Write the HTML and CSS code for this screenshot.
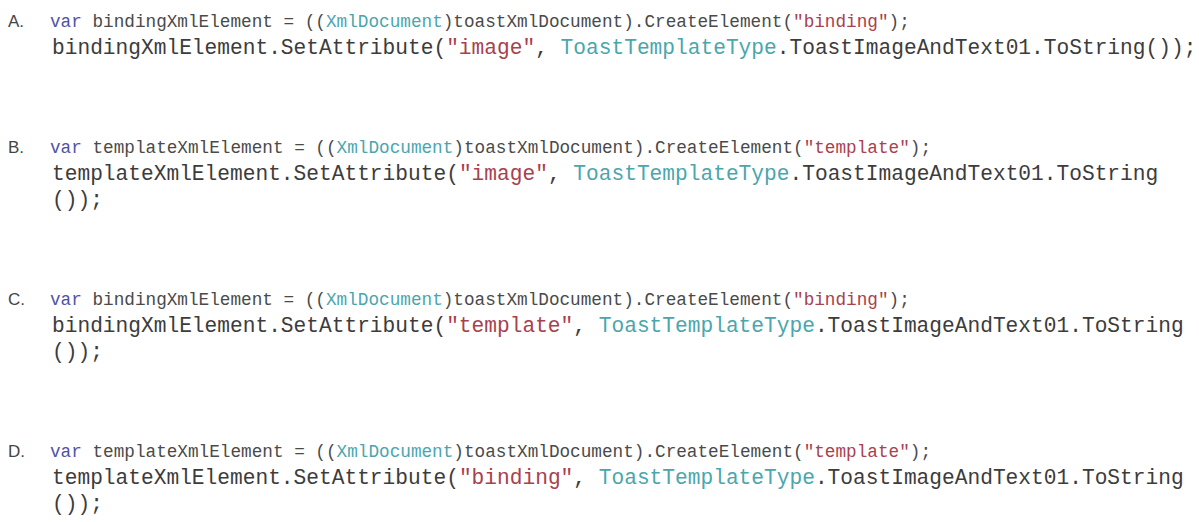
FILE: index.html
```html
<!DOCTYPE html>
<html>
<head>
<meta charset="utf-8">
<link rel="stylesheet" href="styles.css">
</head>
<body>
<div class="options">
  <div class="option">
    <div class="label">A.</div>
    <div class="code">
      <div class="line small"><span class="kw">var</span> bindingXmlElement = ((<span class="ty">XmlDocument</span>)toastXmlDocument).CreateElement(<span class="st">"binding"</span>);</div>
      <div class="line big">bindingXmlElement.SetAttribute(<span class="st">"image"</span>, <span class="ty">ToastTemplateType</span>.ToastImageAndText01.ToString());</div>
    </div>
  </div>
  <div class="option">
    <div class="label">B.</div>
    <div class="code">
      <div class="line small"><span class="kw">var</span> templateXmlElement = ((<span class="ty">XmlDocument</span>)toastXmlDocument).CreateElement(<span class="st">"template"</span>);</div>
      <div class="line big">templateXmlElement.SetAttribute(<span class="st">"image"</span>, <span class="ty">ToastTemplateType</span>.ToastImageAndText01.ToString</div>
      <div class="line big">());</div>
    </div>
  </div>
  <div class="option">
    <div class="label">C.</div>
    <div class="code">
      <div class="line small"><span class="kw">var</span> bindingXmlElement = ((<span class="ty">XmlDocument</span>)toastXmlDocument).CreateElement(<span class="st">"binding"</span>);</div>
      <div class="line big">bindingXmlElement.SetAttribute(<span class="st">"template"</span>, <span class="ty">ToastTemplateType</span>.ToastImageAndText01.ToString</div>
      <div class="line big">());</div>
    </div>
  </div>
  <div class="option">
    <div class="label">D.</div>
    <div class="code">
      <div class="line small"><span class="kw">var</span> templateXmlElement = ((<span class="ty">XmlDocument</span>)toastXmlDocument).CreateElement(<span class="st">"template"</span>);</div>
      <div class="line big">templateXmlElement.SetAttribute(<span class="st">"binding"</span>, <span class="ty">ToastTemplateType</span>.ToastImageAndText01.ToString</div>
      <div class="line big">());</div>
    </div>
  </div>
</div>
</body>
</html>
```

FILE: styles.css
```css
html, body {
  margin: 0;
  padding: 0;
  background: #ffffff;
}
body {
  padding: 9px 0 0 0;
}
.options {
  display: flex;
  flex-direction: column;
  gap: 74px;
}
.option {
  display: flex;
  align-items: flex-start;
}
.label {
  width: 50px;
  padding-left: 8px;
  box-sizing: border-box;
  font-family: "Liberation Sans", Arial, sans-serif;
  font-size: 17px;
  line-height: 26px;
  color: #444;
}
.code {
  display: flex;
  flex-direction: column;
  font-family: "Liberation Mono", "Courier New", monospace;
  color: #3c3c3c;
  white-space: pre;
}
.line {
  height: 26px;
  line-height: 26px;
}
.small {
  font-size: 17.7px;
  color: #4a4a4a;
}
.big {
  font-size: 21.2px;
  padding-left: 2px;
}
.kw {
  color: #5252a8;
}
.ty {
  color: #4aa6ad;
}
.st {
  color: #a8414e;
}
```
